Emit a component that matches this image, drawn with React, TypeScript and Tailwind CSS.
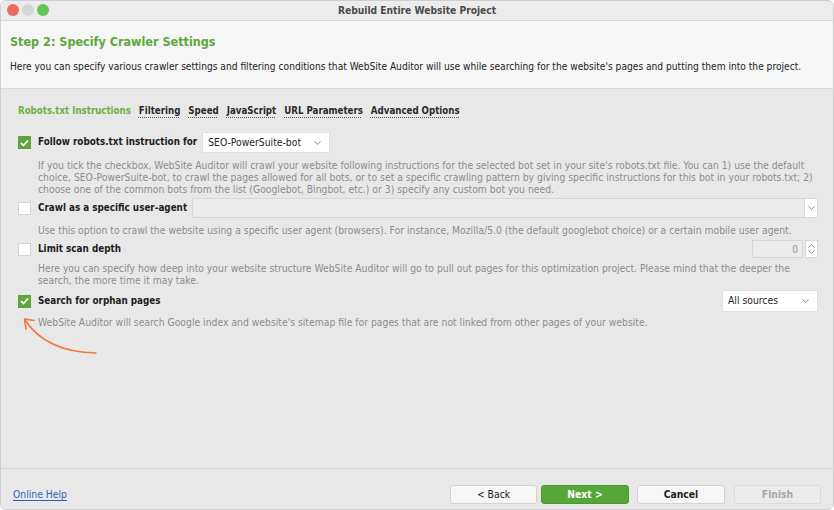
import React from "react";

const FONT = { fontFamily: '"DejaVu Sans Condensed", "DejaVu Sans", Verdana, sans-serif' };

function Check({ on }: { on: boolean }) {
  return on ? (
    <span className="w-[13px] h-[13px] shrink-0 bg-[#5ea63b] flex items-center justify-center">
      <svg width="9" height="8" viewBox="0 0 9 8">
        <path d="M1 4.2 L3.5 6.5 L8 1.5" stroke="#fff" strokeWidth="1.8" fill="none" />
      </svg>
    </span>
  ) : (
    <span className="w-[13px] h-[13px] shrink-0 bg-white border border-[#d4d4d4]" />
  );
}

function Chevron({ up = false }: { up?: boolean }) {
  return (
    <svg width="7" height="4" viewBox="0 0 7 4" className={up ? "rotate-180" : ""}>
      <path d="M0.5 0.5 L3.5 3.2 L6.5 0.5" stroke="#8a8a8a" strokeWidth="1" fill="none" />
    </svg>
  );
}

function Desc({ children }: { children: React.ReactNode }) {
  return (
    <p className="pl-[20px] text-[10.3px] leading-[12px] text-[#8c8c8c] whitespace-nowrap">{children}</p>
  );
}

export default function App() {
  const tabs = ["Filtering", "Speed", "JavaScript", "URL Parameters", "Advanced Options"];
  return (
    <div
      className="w-[834px] h-[510px] flex flex-col bg-[#e8e8e8] overflow-hidden border border-[#cfcfcf] rounded-[6px] text-[#1d1d1d]"
      style={FONT}
    >
      {/* title bar */}
      <div className="h-[19px] shrink-0 relative flex items-center justify-center bg-[#ececec]">
        <div className="absolute left-[6px] top-[3px] flex gap-[3px]">
          <span className="w-[12px] h-[12px] rounded-full bg-[#ee6a5f]" />
          <span className="w-[12px] h-[12px] rounded-full bg-[#d5d5d5]" />
          <span className="w-[12px] h-[12px] rounded-full bg-[#61c454]" />
        </div>
        <span className="text-[10.2px] font-bold text-[#4a4a4a]">Rebuild Entire Website Project</span>
      </div>

      {/* header */}
      <div className="h-[69px] shrink-0 bg-[#f6f6f6] border-y border-[#d9d9d9] px-[9px] pt-[12px]">
        <h1 className="text-[12.5px] leading-[18px] font-bold text-[#5ea63b]">Step 2: Specify Crawler Settings</h1>
        <p className="mt-[9px] text-[10.15px] leading-[13px] text-[#222] whitespace-nowrap">
          Here you can specify various crawler settings and filtering conditions that WebSite Auditor will use while searching for the website's pages and putting them into the project.
        </p>
      </div>

      {/* body */}
      <div className="flex-1 relative pl-[17px] pr-[15px] pt-[15px]">
        <div className="flex items-center gap-[8px] text-[9.65px] leading-[14px] font-bold">
          <span className="text-[#6cb043]">Robots.txt Instructions</span>
          {tabs.map((t) => (
            <span key={t} className="text-[#2a2a2a] underline decoration-dotted decoration-[#555] underline-offset-[3px]">
              {t}
            </span>
          ))}
        </div>

        {/* row 1 */}
        <div className="mt-[14px] flex items-center h-[21px]">
          <Check on />
          <span className="ml-[7px] text-[9.8px] font-bold">Follow robots.txt instruction for</span>
          <div className="ml-[5px] w-[128px] h-[21px] bg-white border border-[#e0e0e0] flex items-center justify-between pl-[5px] pr-[8px] text-[10.3px]">
            <span>SEO-PowerSuite-bot</span>
            <Chevron />
          </div>
        </div>
        <div className="mt-[6px]">
          <Desc>
            If you tick the checkbox, WebSite Auditor will crawl your website following instructions for the selected bot set in your site's robots.txt file. You can 1) use the default
            <br />
            choice, SEO-PowerSuite-bot, to crawl the pages allowed for all bots, or to set a specific crawling pattern by giving specific instructions for this bot in your robots.txt; 2)
            <br />
            choose one of the common bots from the list (Googlebot, Bingbot, etc.) or 3) specify any custom bot you need.
          </Desc>
        </div>

        {/* row 2 */}
        <div className="mt-[3px] flex items-center h-[20px]">
          <Check on={false} />
          <span className="ml-[7px] text-[9.8px] font-bold">Crawl as a specific user-agent</span>
          <div className="ml-[5px] flex-1 h-[20px] bg-[#ebebeb] border border-[#d6d6d6]" />
          <div className="w-[13px] h-[20px] bg-white border border-l-0 border-[#d6d6d6] flex items-center justify-center">
            <Chevron />
          </div>
        </div>
        <div className="mt-[6px]">
          <Desc>
            Use this option to crawl the website using a specific user agent (browsers). For instance, Mozilla/5.0 (the default googlebot choice) or a certain mobile user agent.
          </Desc>
        </div>

        {/* row 3 */}
        <div className="mt-[4px] flex items-center h-[18px]">
          <Check on={false} />
          <span className="ml-[7px] text-[9.8px] font-bold">Limit scan depth</span>
          <div className="ml-auto w-[51px] h-[18px] bg-[#ebebeb] border border-[#d6d6d6] flex items-center justify-end pr-[4px] text-[10px] text-[#9a9a9a]">
            0
          </div>
          <div className="ml-[2px] w-[13px] h-[18px] flex flex-col items-center justify-center gap-[2px] bg-white border border-[#d6d6d6]">
            <Chevron up />
            <Chevron />
          </div>
        </div>
        <div className="mt-[4px]">
          <Desc>
            Here you can specify how deep into your website structure WebSite Auditor will go to pull out pages for this optimization project. Please mind that the deeper the
            <br />
            search, the more time it may take.
          </Desc>
        </div>

        {/* row 4 */}
        <div className="mt-[4px] flex items-center h-[22px]">
          <Check on />
          <span className="ml-[7px] text-[9.8px] font-bold">Search for orphan pages</span>
          <div className="ml-auto w-[96px] h-[22px] bg-white border border-[#e0e0e0] flex items-center justify-between pl-[5px] pr-[8px] text-[10.3px]">
            <span>All sources</span>
            <Chevron />
          </div>
        </div>
        <div className="mt-[4px]">
          <Desc>
            WebSite Auditor will search Google index and website's sitemap file for pages that are not linked from other pages of your website.
          </Desc>
        </div>

        {/* annotation arrow */}
        <svg className="absolute left-0 top-0 pointer-events-none" width="120" height="280" viewBox="0 89 120 280">
          <path d="M95 353 Q45 352 24 320" stroke="#f3763f" strokeWidth="1.6" fill="none" strokeLinecap="round" />
          <path d="M33 320.5 L23.5 319 L25 329" stroke="#f3763f" strokeWidth="1.6" fill="none" strokeLinecap="round" strokeLinejoin="round" />
        </svg>
      </div>

      {/* footer */}
      <div className="h-[41px] shrink-0 border-t border-[#d4d4d4] flex items-start pt-[16px] pl-[12px] pr-[12px]">
        <span className="mt-[2px] text-[10.3px] text-[#2f63b5] underline underline-offset-2">Online Help</span>
        <div className="ml-auto flex text-[10.3px]">
          <button className="w-[87px] h-[19px] bg-[#f6f6f6] border border-[#d2d2d2] rounded-[3px] text-[#222]">&lt; Back</button>
          <button className="ml-[4px] w-[88px] h-[19px] bg-[#57a63a] border border-[#4b9a31] rounded-[3px] text-white font-bold">Next &gt;</button>
          <button className="ml-[8px] w-[88px] h-[19px] bg-[#f6f6f6] border border-[#d2d2d2] rounded-[3px] font-bold text-[#222]">Cancel</button>
          <button className="ml-[9px] w-[87px] h-[19px] bg-[#ebebeb] border border-[#dadada] rounded-[3px] font-bold text-[#a8a8a8]">Finish</button>
        </div>
      </div>
    </div>
  );
}
